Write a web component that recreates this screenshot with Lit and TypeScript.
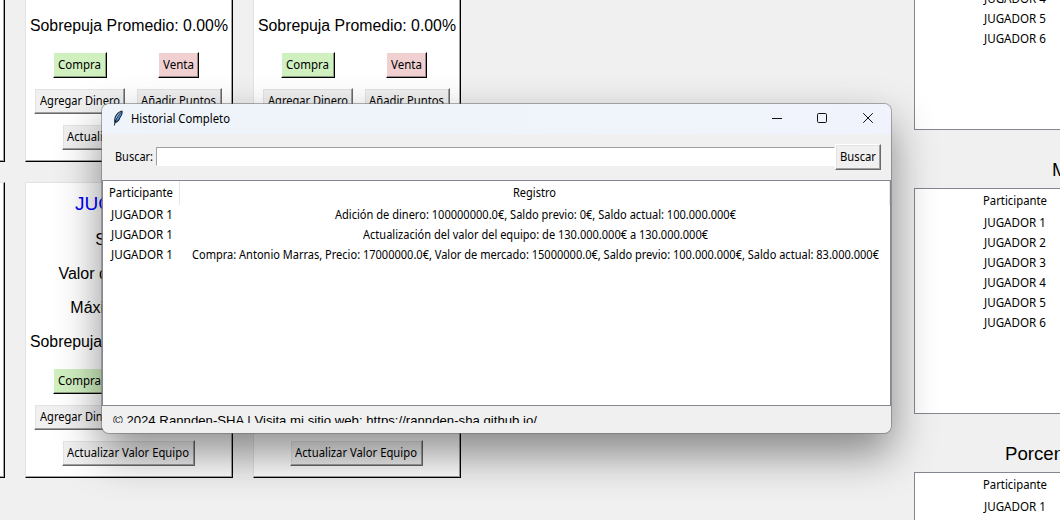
import { LitElement, html, css, svg } from "lit";
import { customElement, property } from "lit/decorators.js";

/** One line of text, condensed or widened so that it spans `w` pixels. */
@customElement("fit-text")
class FitText extends LitElement {
  @property() text = "";
  @property({ type: Number }) w = 0;
  static styles = css`
    :host { display: inline-block; white-space: pre; text-align: left; vertical-align: top; }
    .t { display: inline-block; transform-origin: 0 50%; vertical-align: top; }
  `;
  updated() {
    const el = this.renderRoot.querySelector(".t") as HTMLElement;
    const natural = el.offsetWidth ? el.getBoundingClientRect().width : 0;
    if (this.w && natural) {
      this.style.width = this.w + "px";
      el.style.transform = `scaleX(${(this.w / natural).toFixed(4)})`;
    }
  }
  render() {
    return html`<span class="t">${this.text}</span>`;
  }
}

const fit = (text: string, w: number) => html`<fit-text .text=${text} .w=${w}></fit-text>`;

@customElement("player-card")
class PlayerCard extends LitElement {
  @property() name = "";
  static styles = css`
    :host {
      display: block; box-sizing: border-box; width: 208px; height: 296px;
      background: #fff; overflow: hidden;
      border: 1px solid #000; border-top-color: #e3e3e3; border-left-color: #e3e3e3;
      box-shadow: inset -1px -1px 0 #a0a0a0;
      padding: 1px 4px 0 4px;
      font: 16px/34px "Liberation Sans", Arial, sans-serif; color: #000;
    }
    .title { height: 39px; line-height: 39px; font-size: 19px; color: #0000ff; text-align: center; }
    .line { height: 34px; text-align: center; white-space: nowrap; }
    .buttons { display: grid; grid-template-columns: 101px 97px; grid-auto-rows: 36px; place-items: center; padding-top: 4px; margin-left: -1px; }
    .wide { grid-column: 1 / 3; }
    .btn {
      box-sizing: border-box; height: 26px; padding: 0; background: #f0f0f0; text-align: center;
      border: 1px solid #696969; border-top-color: #fff; border-left-color: #fff;
      box-shadow: inset -1px -1px 0 #a0a0a0, inset 1px 1px 0 #e3e3e3;
      font: 12px/24px "Noto Sans", "Open Sans", sans-serif; white-space: nowrap;
    }
    .buy { width: 54px; background: #d0f0c0; border-right-color: #000; border-bottom-color: #000; box-shadow: inset -1px -1px 0 #8ba080; }
    .sell { width: 41px; background: #f0d0d0; border-right-color: #000; border-bottom-color: #000; box-shadow: inset -1px -1px 0 #a08b8b; }
    .money { width: 91px; }
    .points { width: 86px; }
    .value { width: 133px; }
  `;
  render() {
    return html`
      <div class="title">${fit(this.name, 109)}</div>
      <div class="line">Saldo: 0€</div>
      <div class="line">Valor del equipo: 0€</div>
      <div class="line">Máxima puja: 0€</div>
      <div class="line">${fit("Sobrepuja Promedio: 0.00%", 198)}</div>
      <div class="buttons">
        <div class="btn buy">${fit("Compra", 43)}</div>
        <div class="btn sell">${fit("Venta", 31)}</div>
        <div class="btn money">${fit("Agregar Dinero", 80)}</div>
        <div class="btn points">${fit("Añadir Puntos", 75)}</div>
        <div class="btn value wide">${fit("Actualizar Valor Equipo", 122)}</div>
      </div>
    `;
  }
}

@customElement("side-table")
class SideTable extends LitElement {
  static styles = css`
    :host {
      display: block; box-sizing: border-box; width: 402px; height: 226px;
      border: 1px solid #828790; background: #fff;
      font: 12px/20px "Noto Sans", "Open Sans", sans-serif; color: #000;
    }
    .cell { width: 200px; height: 20px; text-align: center; }
    .head { height: 24px; line-height: 24px; }
  `;
  render() {
    return html`
      <div class="cell head">${fit("Participante", 64)}</div>
      ${[1, 2, 3, 4, 5, 6].map((n) => html`<div class="cell">${fit("JUGADOR " + n, 62)}</div>`)}
    `;
  }
}

const feather = svg`
  <path d="M10.2 .6 C7.5 .8 3.4 4.2 2.5 8 C2.1 9.8 2 11.3 2.4 12.5 L1.9 15.4 L2.7 15.5 L3.5 12.9 C6 12.5 7.8 10.2 8.4 7.8 L9.6 5.8 C10.7 4 11 2 10.2 .6Z" fill="#16202e"/>
  <path d="M9.3 1.6 C7 2.6 4.2 5.6 3.4 8.4 L3.1 10.6 C4.8 7.6 6.6 4.8 9.3 1.6Z" fill="#a8d2f6"/>
  <path d="M9.8 1.8 C7.3 4.6 4.8 8.2 3.8 11.6 C6 10.9 7 9.2 7.6 7.3 L8.9 5.2Z" fill="#4a90dc"/>
`;

@customElement("history-window")
class HistoryWindow extends LitElement {
  static styles = css`
    :host {
      display: flex; flex-direction: column; box-sizing: border-box; width: 791px; height: 331px;
      border: 1px solid rgba(110, 112, 118, 0.55); border-radius: 8px; background: #f0f0f0 padding-box;
      box-shadow: 0 20px 44px rgba(0, 0, 0, 0.44);
      font: 12px/20px "Noto Sans", "Open Sans", sans-serif; color: #000;
    }
    .bar {
      display: flex; align-items: center; height: 30px; padding-left: 10px;
      border-radius: 7px 7px 0 0; background: linear-gradient(90deg, #eef4f9, #f0f3fb);
    }
    .icon { width: 12px; height: 16px; margin-right: 7px; margin-top: -2px; }
    .name { flex: 1; line-height: 30px; }
    .controls { width: 128px; height: 30px; }
    .search { display: flex; height: 46px; padding: 10px 0 0 13px; box-sizing: border-box; }
    .label { width: 41px; line-height: 25px; }
    .entry {
      box-sizing: border-box; width: 679px; height: 19px; margin-top: 3px; background: #fff;
      border: 1px solid #fff; border-top-color: #a0a0a0; border-left-color: #a0a0a0;
    }
    .go {
      box-sizing: border-box; width: 46px; height: 26px; line-height: 24px; text-align: center;
      border: 1px solid #696969; border-top-color: #fff; border-left-color: #fff;
      box-shadow: inset -1px -1px 0 #a0a0a0, inset 1px 1px 0 #e3e3e3;
    }
    .table { box-sizing: border-box; height: 226px; border: 1px solid #828790; background: #fff; }
    .row { display: grid; grid-template-columns: 77px 710px; height: 20px; text-align: center; }
    .head { height: 24px; line-height: 24px; }
    .head > div { box-sizing: border-box; border-right: 1px solid #e5e5e5; }
    .foot {
      width: 500px; height: 7px; margin: 10px 0 0 11px; overflow: hidden;
      display: flex; align-items: center;
      font: 13.33px/16px "Liberation Sans", Arial, sans-serif;
    }
    .foot fit-text { margin-top: 2px; }
  `;
  private rows: [string, string, number][] = [
    ["JUGADOR 1", "Adición de dinero: 100000000.0€, Saldo previo: 0€, Saldo actual: 100.000.000€", 401],
    ["JUGADOR 1", "Actualización del valor del equipo: de 130.000.000€ a 130.000.000€", 345],
    ["JUGADOR 1", "Compra: Antonio Marras, Precio: 17000000.0€, Valor de mercado: 15000000.0€, Saldo previo: 100.000.000€, Saldo actual: 83.000.000€", 687],
  ];
  render() {
    return html`
      <div class="bar">
        <svg class="icon" viewBox="0 0 12 16">${feather}</svg>
        <div class="name">${fit("Historial Completo", 99)}</div>
        <svg class="controls" viewBox="0 0 128 30" fill="none" stroke="#111" stroke-width="1">
          <path d="M9 14.5H19" />
          <rect x="54.5" y="9.5" width="9" height="9" rx="1.2" />
          <path d="M100.2 9.2L109.8 18.8M109.8 9.2L100.2 18.8" />
        </svg>
      </div>
      <div class="search">
        <div class="label">${fit("Buscar:", 38)}</div>
        <div class="entry"></div>
        <div class="go">${fit("Buscar", 36)}</div>
      </div>
      <div class="table">
        <div class="row head">
          <div>${fit("Participante", 64)}</div>
          <div>${fit("Registro", 43)}</div>
        </div>
        ${this.rows.map(([who, what, w]) => html`<div class="row"><div>${fit(who, 62)}</div><div>${fit(what, w)}</div></div>`)}
      </div>
      <div class="foot">${fit("© 2024 Rannden-SHA | Visita mi sitio web: https://rannden-sha.github.io/", 424)}</div>
    `;
  }
}

@customElement("app-root")
class AppRoot extends LitElement {
  static styles = css`
    :host {
      display: flex; position: relative; width: 1060px; height: 520px; overflow: hidden;
      background: #f0f0f0; color: #000;
    }
    .cards {
      display: grid; grid-template-columns: repeat(3, 208px); grid-auto-rows: 296px; gap: 20px;
      margin: -134px 0 0 -203px; flex: none; align-content: start;
    }
    .side { flex: none; margin: -96px 0 0 453px; width: 402px; }
    .heading {
      height: 58px; box-sizing: border-box; line-height: 22px; padding-top: 29px;
      font-family: "Liberation Sans", Arial, sans-serif; font-size: 18.67px; white-space: nowrap;
    }
    .market { padding-left: 138px; }
    .percent { padding-left: 91px; }
    .dialog { position: absolute; left: 101px; top: 103px; }
  `;
  render() {
    return html`
      <div class="cards">
        ${[1, 2, 3, 4, 5, 6].map((n) => html`<player-card .name=${"JUGADOR " + n}></player-card>`)}
      </div>
      <div class="side">
        <side-table></side-table>
        <div class="heading market">Mercado</div>
        <side-table></side-table>
        <div class="heading percent">Porcentaje</div>
        <side-table></side-table>
      </div>
      <history-window class="dialog"></history-window>
    `;
  }
}
